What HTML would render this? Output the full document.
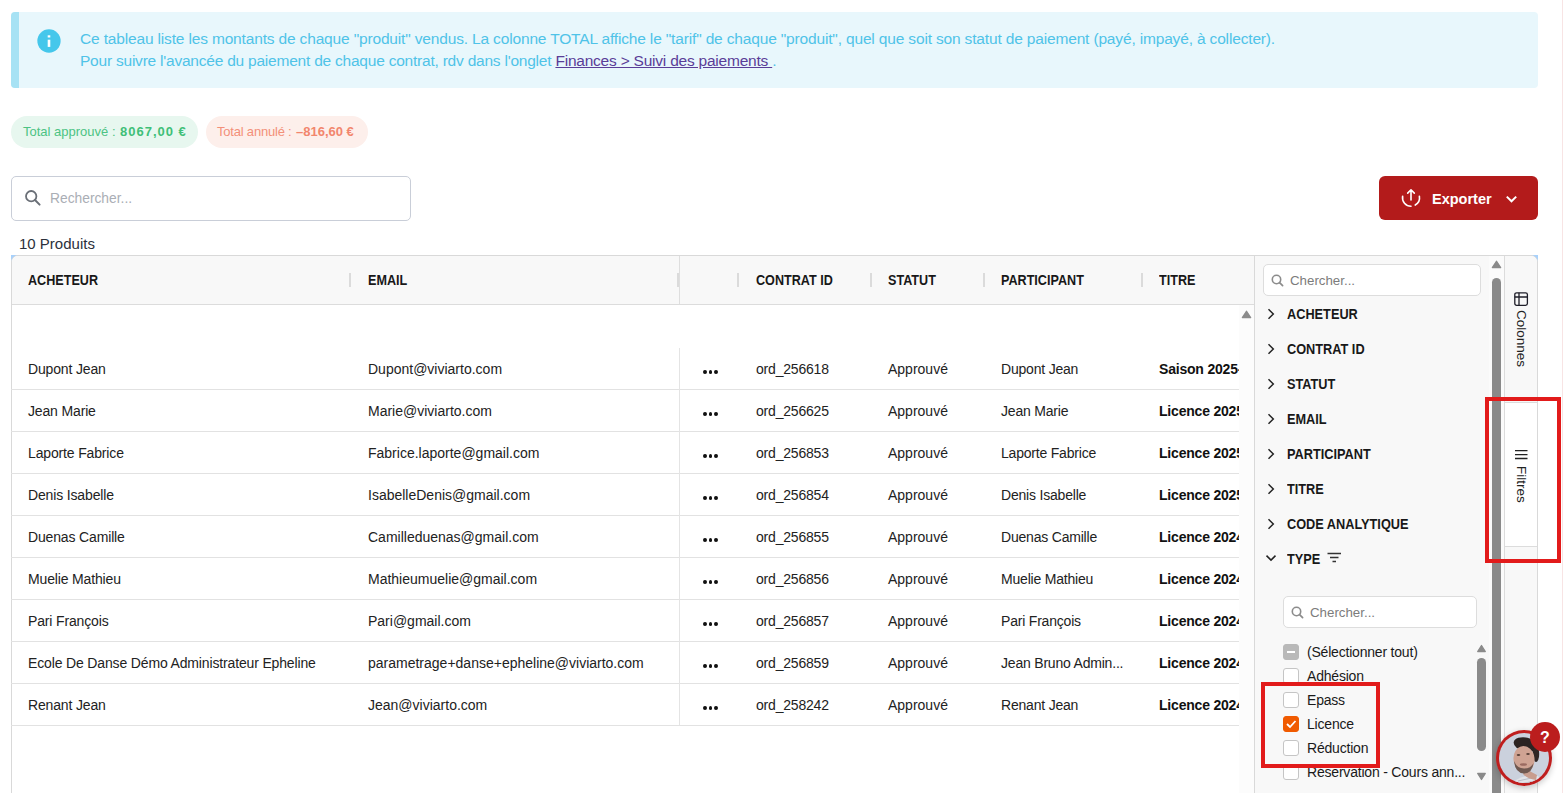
<!DOCTYPE html>
<html><head><meta charset="utf-8">
<style>
*{box-sizing:border-box;margin:0;padding:0}
html,body{width:1563px;height:793px;overflow:hidden;background:#fff;font-family:"Liberation Sans",sans-serif;position:relative}
.a{position:absolute}
.edge{left:1562px;top:0;width:1px;height:793px;background:#f8e4e4}
.banner{left:11px;top:12px;width:1527px;height:76px;background:#e8f7fc;border-radius:4px;overflow:hidden}
.banner .bar{left:0;top:0;width:8px;height:76px;background:#a7e2f4}
.info{left:38px;top:30px;width:23px;height:23px;border-radius:50%;background:#4bc6ea}
.info:before{content:"";position:absolute;left:10px;top:5px;width:3px;height:3px;background:#fff;border-radius:1px}
.info:after{content:"";position:absolute;left:10px;top:10px;width:3px;height:8px;background:#fff}
.btxt{color:#52c4e8;font-size:15px;white-space:nowrap;left:80px}
.btxt a{color:#5b3b9a;text-decoration:underline}
.pill{top:116px;height:32px;border-radius:16px;font-size:13px;line-height:32px;white-space:nowrap}
.pill b{font-weight:bold}
.pg{left:11px;width:187px;background:#e8f7ef;color:#45c27f;padding-left:12px}
.pr{left:206px;width:162px;background:#fdeeea;color:#f38a74;padding-left:11px}
.search{left:11px;top:176px;width:400px;height:45px;border:1px solid #c9ced8;border-radius:5px}
.search .ph{left:38px;top:0;line-height:43px;font-size:14px;color:#9ea3ab}
.export{left:1379px;top:176px;width:159px;height:44px;background:#b31b1b;border-radius:6px;color:#fff}
.export .t{left:53px;top:0;line-height:44px;font-size:16px;font-weight:bold}
.count{left:19px;top:233px;font-size:15px;color:#333;white-space:nowrap}
.gridbox{left:11px;top:255px;width:1527px;height:560px;border:1px solid #d9d9d9;border-radius:7px 7px 0 0;background:#fff}
.hdr{left:12px;top:256px;width:1242px;height:49px;background:#f8f8f8;border-bottom:1px solid #dcdcdc;border-top-left-radius:6px}
.ht{top:256px;line-height:48px;font-size:14px;font-weight:bold;color:#1a1a1a;white-space:nowrap}
.hs{top:273px;width:2px;height:14px;background:#dbdbdb}
.bodyclip{left:11px;top:347px;width:1228px;height:446px;overflow:hidden}
.rl{left:0;width:1228px;height:1px;background:#e2e2e2}
.ct{line-height:42px;font-size:14px;color:#222;white-space:nowrap}
.ct.b{font-weight:bold;color:#111}
.dots{width:16px;height:4px}
.dots i{position:absolute;top:0;width:3.8px;height:3.8px;border-radius:50%;background:#111}
.dots i:nth-child(1){left:0.2px}.dots i:nth-child(2){left:5.6px}.dots i:nth-child(3){left:11px}
.panel{left:1254px;top:256px;width:250px;height:537px;background:#f8f8f8;border-left:1px solid #d9d9d9}
.side{left:1504px;top:256px;width:33px;height:537px;background:#f8f8f8;border-left:1px solid #dcdcdc;border-top-right-radius:6px}
.psearch{background:#fff;border:1px solid #dddddd;border-radius:5px}
.pt{font-size:14px;font-weight:bold;color:#1a1a1a;white-space:nowrap}
.chev{width:8px;height:12px}
.cb{width:16px;height:16px;border:1px solid #c5c5c5;border-radius:3px;background:#fff}
.lt{font-size:14px;color:#1a1a1a;white-space:nowrap}
.redbox{border:4px solid #e21b1b}
.t{white-space:nowrap}
.pill{top:116px;height:32px;border-radius:16px}

</style></head><body>
<div class="a edge"></div>
<div class="a banner"><div class="a bar"></div></div>
<svg class="a" style="left:37.3px;top:29.4px" width="24" height="24"><circle cx="12" cy="12" r="11.65" fill="#45c7eb"/><rect x="10.7" y="6.3" width="2.6" height="2.2" fill="#fff"/><rect x="10.7" y="10.7" width="2.6" height="7.2" fill="#fff"/></svg>
<div class="a t " style="left:80px;top:29.13px;font-size:15.5px;line-height:19px;color:#4fc3e8;letter-spacing:-0.16px">Ce tableau liste les montants de chaque &quot;produit&quot; vendus. La colonne TOTAL affiche le &quot;tarif&quot; de chaque &quot;produit&quot;, quel que soit son statut de paiement (payé, impayé, à collecter).</div>
<div class="a t " style="left:80px;top:51.13px;font-size:15.5px;line-height:19px;color:#4fc3e8;letter-spacing:-0.22px">Pour suivre l&#x27;avancée du paiement de chaque contrat, rdv dans l&#x27;onglet <u style="color:#5a3d98">Finances &gt; Suivi des paiements </u>.</div>
<div class="a pill" style="left:11px;width:187px;background:#e7f7ef"></div><div class="a t " style="left:23px;top:123.50px;font-size:13px;line-height:16px;color:#4cc383">Total approuvé :</div><div class="a t " style="left:120px;top:123.50px;font-size:13px;line-height:16px;color:#3fbf78;font-weight:bold;letter-spacing:1px">8067,00 €</div>
<div class="a pill" style="left:206px;width:162px;background:#fdefeb"></div><div class="a t " style="left:217px;top:123.50px;font-size:13px;line-height:16px;color:#f39079;letter-spacing:-0.2px">Total annulé :</div><div class="a t " style="left:296px;top:123.50px;font-size:13px;line-height:16px;color:#f2866d;font-weight:bold">–816,60 €</div>
<div class="a search"></div><svg class="a" style="left:24px;top:189px" width="18" height="18"><circle cx="7.2" cy="7.2" r="5.2" fill="none" stroke="#6a6f77" stroke-width="1.8"/><path d="M11 11 L15.6 15.6" stroke="#6a6f77" stroke-width="2" stroke-linecap="round"/></svg><div class="a t " style="left:50px;top:189.72px;font-size:13.8px;line-height:17px;color:#aaaeb5">Rechercher...</div>
<div class="a export"></div><svg class="a" style="left:1400px;top:187px" width="22" height="22"><path d="M11 2.9 V13 M7.7 6.1 L11 2.8 L14.3 6.1" fill="none" stroke="#fff" stroke-width="1.6" stroke-linecap="round" stroke-linejoin="round"/><path d="M2.63 9.22 A8.5 8.5 0 0 0 11 19.2" fill="none" stroke="#fff" stroke-width="1.6" stroke-linecap="round"/><path d="M19.37 9.22 A8.5 8.5 0 0 1 15.25 18.06" fill="none" stroke="#fff" stroke-width="1.6" stroke-linecap="round"/></svg><div class="a t " style="left:1432px;top:189.98px;font-size:14.5px;line-height:18px;color:#fff;font-weight:bold">Exporter</div><svg class="a" style="left:1504px;top:193px" width="15" height="12"><path d="M2.8 3.6 L7.5 8.3 L12.2 3.6" fill="none" stroke="#fff" stroke-width="2"/></svg>
<div class="a t " style="left:19px;top:234.30px;font-size:15px;line-height:19px;color:#2b303b">10 Produits</div>
<div class="a" style="left:11px;top:255px;width:7px;height:7px;background:#a8d1fb"></div><div class="a" style="left:1531px;top:255px;width:7px;height:7px;background:#a8d1fb"></div>
<div class="a gridbox"></div>
<div class="a hdr"></div>
<div class="a hs" style="left:349px"></div><div class="a hs" style="left:677px"></div><div class="a hs" style="left:737px"></div><div class="a hs" style="left:870px"></div><div class="a hs" style="left:983px"></div><div class="a hs" style="left:1141px"></div>
<div class="a t " style="left:28px;top:271.15px;font-size:14px;line-height:18px;font-weight:bold;color:#181818;transform:scaleX(0.9);transform-origin:0 0">ACHETEUR</div><div class="a t " style="left:368px;top:271.15px;font-size:14px;line-height:18px;font-weight:bold;color:#181818;transform:scaleX(0.9);transform-origin:0 0">EMAIL</div><div class="a t " style="left:756px;top:271.15px;font-size:14px;line-height:18px;font-weight:bold;color:#181818;transform:scaleX(0.9);transform-origin:0 0">CONTRAT ID</div><div class="a t " style="left:888px;top:271.15px;font-size:14px;line-height:18px;font-weight:bold;color:#181818;transform:scaleX(0.9);transform-origin:0 0">STATUT</div><div class="a t " style="left:1001px;top:271.15px;font-size:14px;line-height:18px;font-weight:bold;color:#181818;transform:scaleX(0.9);transform-origin:0 0">PARTICIPANT</div><div class="a t " style="left:1159px;top:271.15px;font-size:14px;line-height:18px;font-weight:bold;color:#181818;transform:scaleX(0.9);transform-origin:0 0">TITRE</div>
<div class="a" style="left:679px;top:256px;width:1px;height:48px;background:#dedede"></div>
<div class="a bodyclip">
<div class="a rl" style="top:42px"></div><div class="a t " style="left:17px;top:13.15px;font-size:14px;line-height:18px;color:#222;letter-spacing:-0.15px">Dupont Jean</div><div class="a t " style="left:357px;top:13.15px;font-size:14px;line-height:18px;color:#222;">Dupont@viviarto.com</div><div class="a t " style="left:745px;top:13.15px;font-size:14px;line-height:18px;color:#222;letter-spacing:-0.2px">ord_256618</div><div class="a t " style="left:877px;top:13.15px;font-size:14px;line-height:18px;color:#222;">Approuvé</div><div class="a t " style="left:990px;top:13.15px;font-size:14px;line-height:18px;color:#222;letter-spacing:-0.2px">Dupont Jean</div><div class="a t " style="left:1148px;top:13.15px;font-size:14px;line-height:18px;color:#222;font-weight:bold;color:#111;letter-spacing:-0.2px">Saison 2025-2026</div><div class="a dots" style="left:692px;top:23.19999999999999px"><i></i><i></i><i></i></div>
<div class="a rl" style="top:84px"></div><div class="a t " style="left:17px;top:55.15px;font-size:14px;line-height:18px;color:#222;letter-spacing:-0.15px">Jean Marie</div><div class="a t " style="left:357px;top:55.15px;font-size:14px;line-height:18px;color:#222;">Marie@viviarto.com</div><div class="a t " style="left:745px;top:55.15px;font-size:14px;line-height:18px;color:#222;letter-spacing:-0.2px">ord_256625</div><div class="a t " style="left:877px;top:55.15px;font-size:14px;line-height:18px;color:#222;">Approuvé</div><div class="a t " style="left:990px;top:55.15px;font-size:14px;line-height:18px;color:#222;letter-spacing:-0.2px">Jean Marie</div><div class="a t " style="left:1148px;top:55.15px;font-size:14px;line-height:18px;color:#222;font-weight:bold;color:#111;letter-spacing:-0.2px">Licence 2025-2026</div><div class="a dots" style="left:692px;top:65.19999999999999px"><i></i><i></i><i></i></div>
<div class="a rl" style="top:126px"></div><div class="a t " style="left:17px;top:97.15px;font-size:14px;line-height:18px;color:#222;letter-spacing:-0.15px">Laporte Fabrice</div><div class="a t " style="left:357px;top:97.15px;font-size:14px;line-height:18px;color:#222;">Fabrice.laporte@gmail.com</div><div class="a t " style="left:745px;top:97.15px;font-size:14px;line-height:18px;color:#222;letter-spacing:-0.2px">ord_256853</div><div class="a t " style="left:877px;top:97.15px;font-size:14px;line-height:18px;color:#222;">Approuvé</div><div class="a t " style="left:990px;top:97.15px;font-size:14px;line-height:18px;color:#222;letter-spacing:-0.2px">Laporte Fabrice</div><div class="a t " style="left:1148px;top:97.15px;font-size:14px;line-height:18px;color:#222;font-weight:bold;color:#111;letter-spacing:-0.2px">Licence 2025-2026</div><div class="a dots" style="left:692px;top:107.19999999999999px"><i></i><i></i><i></i></div>
<div class="a rl" style="top:168px"></div><div class="a t " style="left:17px;top:139.15px;font-size:14px;line-height:18px;color:#222;letter-spacing:-0.15px">Denis Isabelle</div><div class="a t " style="left:357px;top:139.15px;font-size:14px;line-height:18px;color:#222;">IsabelleDenis@gmail.com</div><div class="a t " style="left:745px;top:139.15px;font-size:14px;line-height:18px;color:#222;letter-spacing:-0.2px">ord_256854</div><div class="a t " style="left:877px;top:139.15px;font-size:14px;line-height:18px;color:#222;">Approuvé</div><div class="a t " style="left:990px;top:139.15px;font-size:14px;line-height:18px;color:#222;letter-spacing:-0.2px">Denis Isabelle</div><div class="a t " style="left:1148px;top:139.15px;font-size:14px;line-height:18px;color:#222;font-weight:bold;color:#111;letter-spacing:-0.2px">Licence 2025-2026</div><div class="a dots" style="left:692px;top:149.2px"><i></i><i></i><i></i></div>
<div class="a rl" style="top:210px"></div><div class="a t " style="left:17px;top:181.15px;font-size:14px;line-height:18px;color:#222;letter-spacing:-0.15px">Duenas Camille</div><div class="a t " style="left:357px;top:181.15px;font-size:14px;line-height:18px;color:#222;">Camilleduenas@gmail.com</div><div class="a t " style="left:745px;top:181.15px;font-size:14px;line-height:18px;color:#222;letter-spacing:-0.2px">ord_256855</div><div class="a t " style="left:877px;top:181.15px;font-size:14px;line-height:18px;color:#222;">Approuvé</div><div class="a t " style="left:990px;top:181.15px;font-size:14px;line-height:18px;color:#222;letter-spacing:-0.2px">Duenas Camille</div><div class="a t " style="left:1148px;top:181.15px;font-size:14px;line-height:18px;color:#222;font-weight:bold;color:#111;letter-spacing:-0.2px">Licence 2024-2025</div><div class="a dots" style="left:692px;top:191.20000000000005px"><i></i><i></i><i></i></div>
<div class="a rl" style="top:252px"></div><div class="a t " style="left:17px;top:223.15px;font-size:14px;line-height:18px;color:#222;letter-spacing:-0.15px">Muelie Mathieu</div><div class="a t " style="left:357px;top:223.15px;font-size:14px;line-height:18px;color:#222;">Mathieumuelie@gmail.com</div><div class="a t " style="left:745px;top:223.15px;font-size:14px;line-height:18px;color:#222;letter-spacing:-0.2px">ord_256856</div><div class="a t " style="left:877px;top:223.15px;font-size:14px;line-height:18px;color:#222;">Approuvé</div><div class="a t " style="left:990px;top:223.15px;font-size:14px;line-height:18px;color:#222;letter-spacing:-0.2px">Muelie Mathieu</div><div class="a t " style="left:1148px;top:223.15px;font-size:14px;line-height:18px;color:#222;font-weight:bold;color:#111;letter-spacing:-0.2px">Licence 2024-2025</div><div class="a dots" style="left:692px;top:233.20000000000005px"><i></i><i></i><i></i></div>
<div class="a rl" style="top:294px"></div><div class="a t " style="left:17px;top:265.15px;font-size:14px;line-height:18px;color:#222;letter-spacing:-0.15px">Pari François</div><div class="a t " style="left:357px;top:265.15px;font-size:14px;line-height:18px;color:#222;">Pari@gmail.com</div><div class="a t " style="left:745px;top:265.15px;font-size:14px;line-height:18px;color:#222;letter-spacing:-0.2px">ord_256857</div><div class="a t " style="left:877px;top:265.15px;font-size:14px;line-height:18px;color:#222;">Approuvé</div><div class="a t " style="left:990px;top:265.15px;font-size:14px;line-height:18px;color:#222;letter-spacing:-0.2px">Pari François</div><div class="a t " style="left:1148px;top:265.15px;font-size:14px;line-height:18px;color:#222;font-weight:bold;color:#111;letter-spacing:-0.2px">Licence 2024-2025</div><div class="a dots" style="left:692px;top:275.20000000000005px"><i></i><i></i><i></i></div>
<div class="a rl" style="top:336px"></div><div class="a t " style="left:17px;top:307.15px;font-size:14px;line-height:18px;color:#222;letter-spacing:-0.15px">Ecole De Danse Démo Administrateur Epheline</div><div class="a t " style="left:357px;top:307.15px;font-size:14px;line-height:18px;color:#222;">parametrage+danse+epheline@viviarto.com</div><div class="a t " style="left:745px;top:307.15px;font-size:14px;line-height:18px;color:#222;letter-spacing:-0.2px">ord_256859</div><div class="a t " style="left:877px;top:307.15px;font-size:14px;line-height:18px;color:#222;">Approuvé</div><div class="a t " style="left:990px;top:307.15px;font-size:14px;line-height:18px;color:#222;letter-spacing:-0.2px">Jean Bruno Admin...</div><div class="a t " style="left:1148px;top:307.15px;font-size:14px;line-height:18px;color:#222;font-weight:bold;color:#111;letter-spacing:-0.2px">Licence 2024-2025</div><div class="a dots" style="left:692px;top:317.20000000000005px"><i></i><i></i><i></i></div>
<div class="a rl" style="top:378px"></div><div class="a t " style="left:17px;top:349.15px;font-size:14px;line-height:18px;color:#222;letter-spacing:-0.15px">Renant Jean</div><div class="a t " style="left:357px;top:349.15px;font-size:14px;line-height:18px;color:#222;">Jean@viviarto.com</div><div class="a t " style="left:745px;top:349.15px;font-size:14px;line-height:18px;color:#222;letter-spacing:-0.2px">ord_258242</div><div class="a t " style="left:877px;top:349.15px;font-size:14px;line-height:18px;color:#222;">Approuvé</div><div class="a t " style="left:990px;top:349.15px;font-size:14px;line-height:18px;color:#222;letter-spacing:-0.2px">Renant Jean</div><div class="a t " style="left:1148px;top:349.15px;font-size:14px;line-height:18px;color:#222;font-weight:bold;color:#111;letter-spacing:-0.2px">Licence 2024-2025</div><div class="a dots" style="left:692px;top:359.20000000000005px"><i></i><i></i><i></i></div>
</div>
<div class="a" style="left:679px;top:348px;width:1px;height:377px;background:#e4e4e4"></div>
<div class="a" style="left:1239px;top:305px;width:15px;height:488px;background:#fcfcfc"></div>
<svg class="a" style="left:1241px;top:310px" width="11" height="9"><path d="M5.5 1.3 L9.6 7.6 L1.4 7.6 Z" fill="#8c8c8c" stroke="#8c8c8c" stroke-linejoin="round" stroke-width="1.4"/></svg>
<div class="a panel"></div>
<div class="a" style="left:1489px;top:256px;width:15px;height:537px;background:#fbfbfb"></div>
<svg class="a" style="left:1491px;top:260px" width="11" height="9"><path d="M5.5 1.3 L9.6 7.6 L1.4 7.6 Z" fill="#8a8a8a" stroke="#8a8a8a" stroke-linejoin="round" stroke-width="1.4"/></svg>
<div class="a" style="left:1492px;top:278px;width:9px;height:520px;background:#8a8a8a;border-radius:4.5px"></div>
<div class="a psearch" style="left:1263px;top:264px;width:218px;height:32px"></div>
<svg class="a" style="left:1271px;top:274px" width="13" height="13"><circle cx="5.5" cy="5.5" r="4.2" fill="none" stroke="#8c8c8c" stroke-width="1.6"/><path d="M8.6 8.6 L11.6 11.6" stroke="#8c8c8c" stroke-width="1.7" stroke-linecap="round"/></svg>
<div class="a t " style="left:1290px;top:271.89px;font-size:13.3px;line-height:17px;color:#7c7c7c">Chercher...</div>
<svg class="a" style="left:1266px;top:307px" width="10" height="14"><path d="M2.5 2.2 L7.3 7 L2.5 11.8" fill="none" stroke="#222" stroke-width="1.5"/></svg><div class="a t " style="left:1287px;top:305.15px;font-size:14px;line-height:18px;font-weight:bold;color:#181818;transform:scaleX(0.91);transform-origin:0 0">ACHETEUR</div>
<svg class="a" style="left:1266px;top:342px" width="10" height="14"><path d="M2.5 2.2 L7.3 7 L2.5 11.8" fill="none" stroke="#222" stroke-width="1.5"/></svg><div class="a t " style="left:1287px;top:340.15px;font-size:14px;line-height:18px;font-weight:bold;color:#181818;transform:scaleX(0.91);transform-origin:0 0">CONTRAT ID</div>
<svg class="a" style="left:1266px;top:377px" width="10" height="14"><path d="M2.5 2.2 L7.3 7 L2.5 11.8" fill="none" stroke="#222" stroke-width="1.5"/></svg><div class="a t " style="left:1287px;top:375.15px;font-size:14px;line-height:18px;font-weight:bold;color:#181818;transform:scaleX(0.91);transform-origin:0 0">STATUT</div>
<svg class="a" style="left:1266px;top:412px" width="10" height="14"><path d="M2.5 2.2 L7.3 7 L2.5 11.8" fill="none" stroke="#222" stroke-width="1.5"/></svg><div class="a t " style="left:1287px;top:410.15px;font-size:14px;line-height:18px;font-weight:bold;color:#181818;transform:scaleX(0.91);transform-origin:0 0">EMAIL</div>
<svg class="a" style="left:1266px;top:447px" width="10" height="14"><path d="M2.5 2.2 L7.3 7 L2.5 11.8" fill="none" stroke="#222" stroke-width="1.5"/></svg><div class="a t " style="left:1287px;top:445.15px;font-size:14px;line-height:18px;font-weight:bold;color:#181818;transform:scaleX(0.91);transform-origin:0 0">PARTICIPANT</div>
<svg class="a" style="left:1266px;top:482px" width="10" height="14"><path d="M2.5 2.2 L7.3 7 L2.5 11.8" fill="none" stroke="#222" stroke-width="1.5"/></svg><div class="a t " style="left:1287px;top:480.15px;font-size:14px;line-height:18px;font-weight:bold;color:#181818;transform:scaleX(0.91);transform-origin:0 0">TITRE</div>
<svg class="a" style="left:1266px;top:517px" width="10" height="14"><path d="M2.5 2.2 L7.3 7 L2.5 11.8" fill="none" stroke="#222" stroke-width="1.5"/></svg><div class="a t " style="left:1287px;top:515.15px;font-size:14px;line-height:18px;font-weight:bold;color:#181818;transform:scaleX(0.91);transform-origin:0 0">CODE ANALYTIQUE</div>
<svg class="a" style="left:1264px;top:553px" width="14" height="10"><path d="M2.5 2.6 L7 7.1 L11.5 2.6" fill="none" stroke="#222" stroke-width="1.5"/></svg><div class="a t " style="left:1287px;top:550.15px;font-size:14px;line-height:18px;font-weight:bold;color:#181818;transform:scaleX(0.91);transform-origin:0 0">TYPE</div>
<svg class="a" style="left:1327px;top:552px" width="15" height="12"><path d="M0.5 1.5 H14 M3 5.5 H11.5 M5.5 9.5 H9" stroke="#333" stroke-width="1.5"/></svg>
<div class="a psearch" style="left:1283px;top:596px;width:194px;height:32px"></div>
<svg class="a" style="left:1291px;top:606px" width="13" height="13"><circle cx="5.5" cy="5.5" r="4.2" fill="none" stroke="#8c8c8c" stroke-width="1.6"/><path d="M8.6 8.6 L11.6 11.6" stroke="#8c8c8c" stroke-width="1.7" stroke-linecap="round"/></svg>
<div class="a t " style="left:1310px;top:603.89px;font-size:13.3px;line-height:17px;color:#7c7c7c">Chercher...</div>
<div class="a cb" style="left:1283px;top:644px;background:#b9b9b9;border-color:#b9b9b9"><div class="a" style="left:3px;top:6px;width:8px;height:2px;background:#fff"></div></div><div class="a t " style="left:1307px;top:643.15px;font-size:14px;line-height:18px;color:#1a1a1a;letter-spacing:-0.2px">(Sélectionner tout)</div>
<div class="a cb" style="left:1283px;top:668px"></div><div class="a t " style="left:1307px;top:667.15px;font-size:14px;line-height:18px;color:#1a1a1a;letter-spacing:-0.2px">Adhésion</div>
<div class="a cb" style="left:1283px;top:692px"></div><div class="a t " style="left:1307px;top:691.15px;font-size:14px;line-height:18px;color:#1a1a1a;letter-spacing:-0.2px">Epass</div>
<div class="a cb" style="left:1283px;top:716px;background:#f05a00;border-color:#f05a00"><svg class="a" style="left:1px;top:2px" width="12" height="10"><path d="M2 5 L5 8 L10.5 2" fill="none" stroke="#fff" stroke-width="1.8"/></svg></div><div class="a t " style="left:1307px;top:715.15px;font-size:14px;line-height:18px;color:#1a1a1a;letter-spacing:-0.2px">Licence</div>
<div class="a cb" style="left:1283px;top:740px"></div><div class="a t " style="left:1307px;top:739.15px;font-size:14px;line-height:18px;color:#1a1a1a;letter-spacing:-0.2px">Réduction</div>
<div class="a cb" style="left:1283px;top:764px"></div><div class="a t " style="left:1307px;top:763.15px;font-size:14px;line-height:18px;color:#1a1a1a;letter-spacing:-0.2px">Réservation - Cours ann...</div>
<svg class="a" style="left:1476px;top:644px" width="11" height="9"><path d="M5.5 1.5 L9.3 7.5 L1.7 7.5 Z" fill="#8a8a8a" stroke="#8a8a8a" stroke-linejoin="round" stroke-width="1.3"/></svg>
<div class="a" style="left:1477px;top:658px;width:9px;height:93px;background:#8a8a8a;border-radius:4.5px"></div>
<svg class="a" style="left:1476px;top:772px" width="11" height="9"><path d="M5.5 7.5 L9.3 1.5 L1.7 1.5 Z" fill="#8a8a8a" stroke="#8a8a8a" stroke-linejoin="round" stroke-width="1.3"/></svg>
<div class="a side"></div>
<div class="a" style="left:1505px;top:402px;width:32px;height:145px;background:#fff;border-top:1px solid #dcdcdc;border-bottom:1px solid #dcdcdc"></div>
<svg class="a" style="left:1514px;top:292px" width="15" height="15"><rect x="0.8" y="0.8" width="12.6" height="12.6" rx="1.8" fill="none" stroke="#1f1f2a" stroke-width="1.3"/><path d="M0.8 5 H13.4 M5 0.8 V13.4" stroke="#1f1f2a" stroke-width="1.3"/></svg>
<div class="a t" style="left:1528px;top:310px;transform-origin:0 0;transform:rotate(90deg);font-size:13.5px;line-height:14px;color:#222">Colonnes</div>
<svg class="a" style="left:1514px;top:449px" width="14" height="12"><path d="M1 1.6 H13.5 M1 5.6 H13.5 M1 9.5 H13.5" stroke="#222" stroke-width="1.3"/></svg>
<div class="a t" style="left:1528px;top:466px;transform-origin:0 0;transform:rotate(90deg);font-size:13.5px;line-height:14px;color:#222">Filtres</div>
<div class="a redbox" style="left:1485px;top:397px;width:76px;height:166px"></div>
<div class="a redbox" style="left:1261px;top:682px;width:119px;height:86px"></div>
<div class="a" style="left:1496px;top:730px;width:56px;height:56px;border-radius:50%;box-shadow:0 2px 6px rgba(0,0,0,.22)"></div>
<svg class="a" style="left:1496px;top:730px" width="56" height="56" viewBox="0 0 56 56">
<defs><clipPath id="cc"><circle cx="28" cy="28" r="25"/></clipPath></defs>
<circle cx="28" cy="28" r="28" fill="#bf1e1e"/>
<g clip-path="url(#cc)">
<rect width="56" height="56" fill="#cbd1dd"/>
<path d="M20 50 Q30 44 42 46 L50 56 L14 56 Z" fill="#e1e3e8"/>
<path d="M22 51 L40 47 M24 54 L44 50" stroke="#b9bcc6" stroke-width="1"/>
<path d="M29 38 Q35 42 41 45 L40 50 Q31 49 27 44 Z" fill="#c89d8e"/>
<ellipse cx="30" cy="14.5" rx="12.5" ry="7" fill="#2b2322" transform="rotate(12 30 14.5)"/>
<ellipse cx="40" cy="24" rx="3.2" ry="8" fill="#2f2624"/>
<ellipse cx="28" cy="29" rx="10.5" ry="13" fill="#cfa393" transform="rotate(-8 28 29)"/>
<path d="M18 31 Q19 43 28 43.5 Q36.5 43 37.5 33 Q35 38.5 28 38.5 Q21 38.5 18 31 Z" fill="#6f5850"/>
<ellipse cx="27.5" cy="34.5" rx="3.6" ry="1.3" fill="#9a6a60"/>
<ellipse cx="22.5" cy="25" rx="1.8" ry="0.9" fill="#5a4038"/><ellipse cx="32" cy="24" rx="1.8" ry="0.9" fill="#5a4038"/>
</g>
</svg>
<div class="a" style="left:1530px;top:722px;width:30px;height:30px;border-radius:50%;background:#bb1d1d"></div>
<div class="a t " style="left:1540px;top:728.46px;font-size:16px;line-height:20px;color:#fff;font-weight:bold">?</div></body></html>
